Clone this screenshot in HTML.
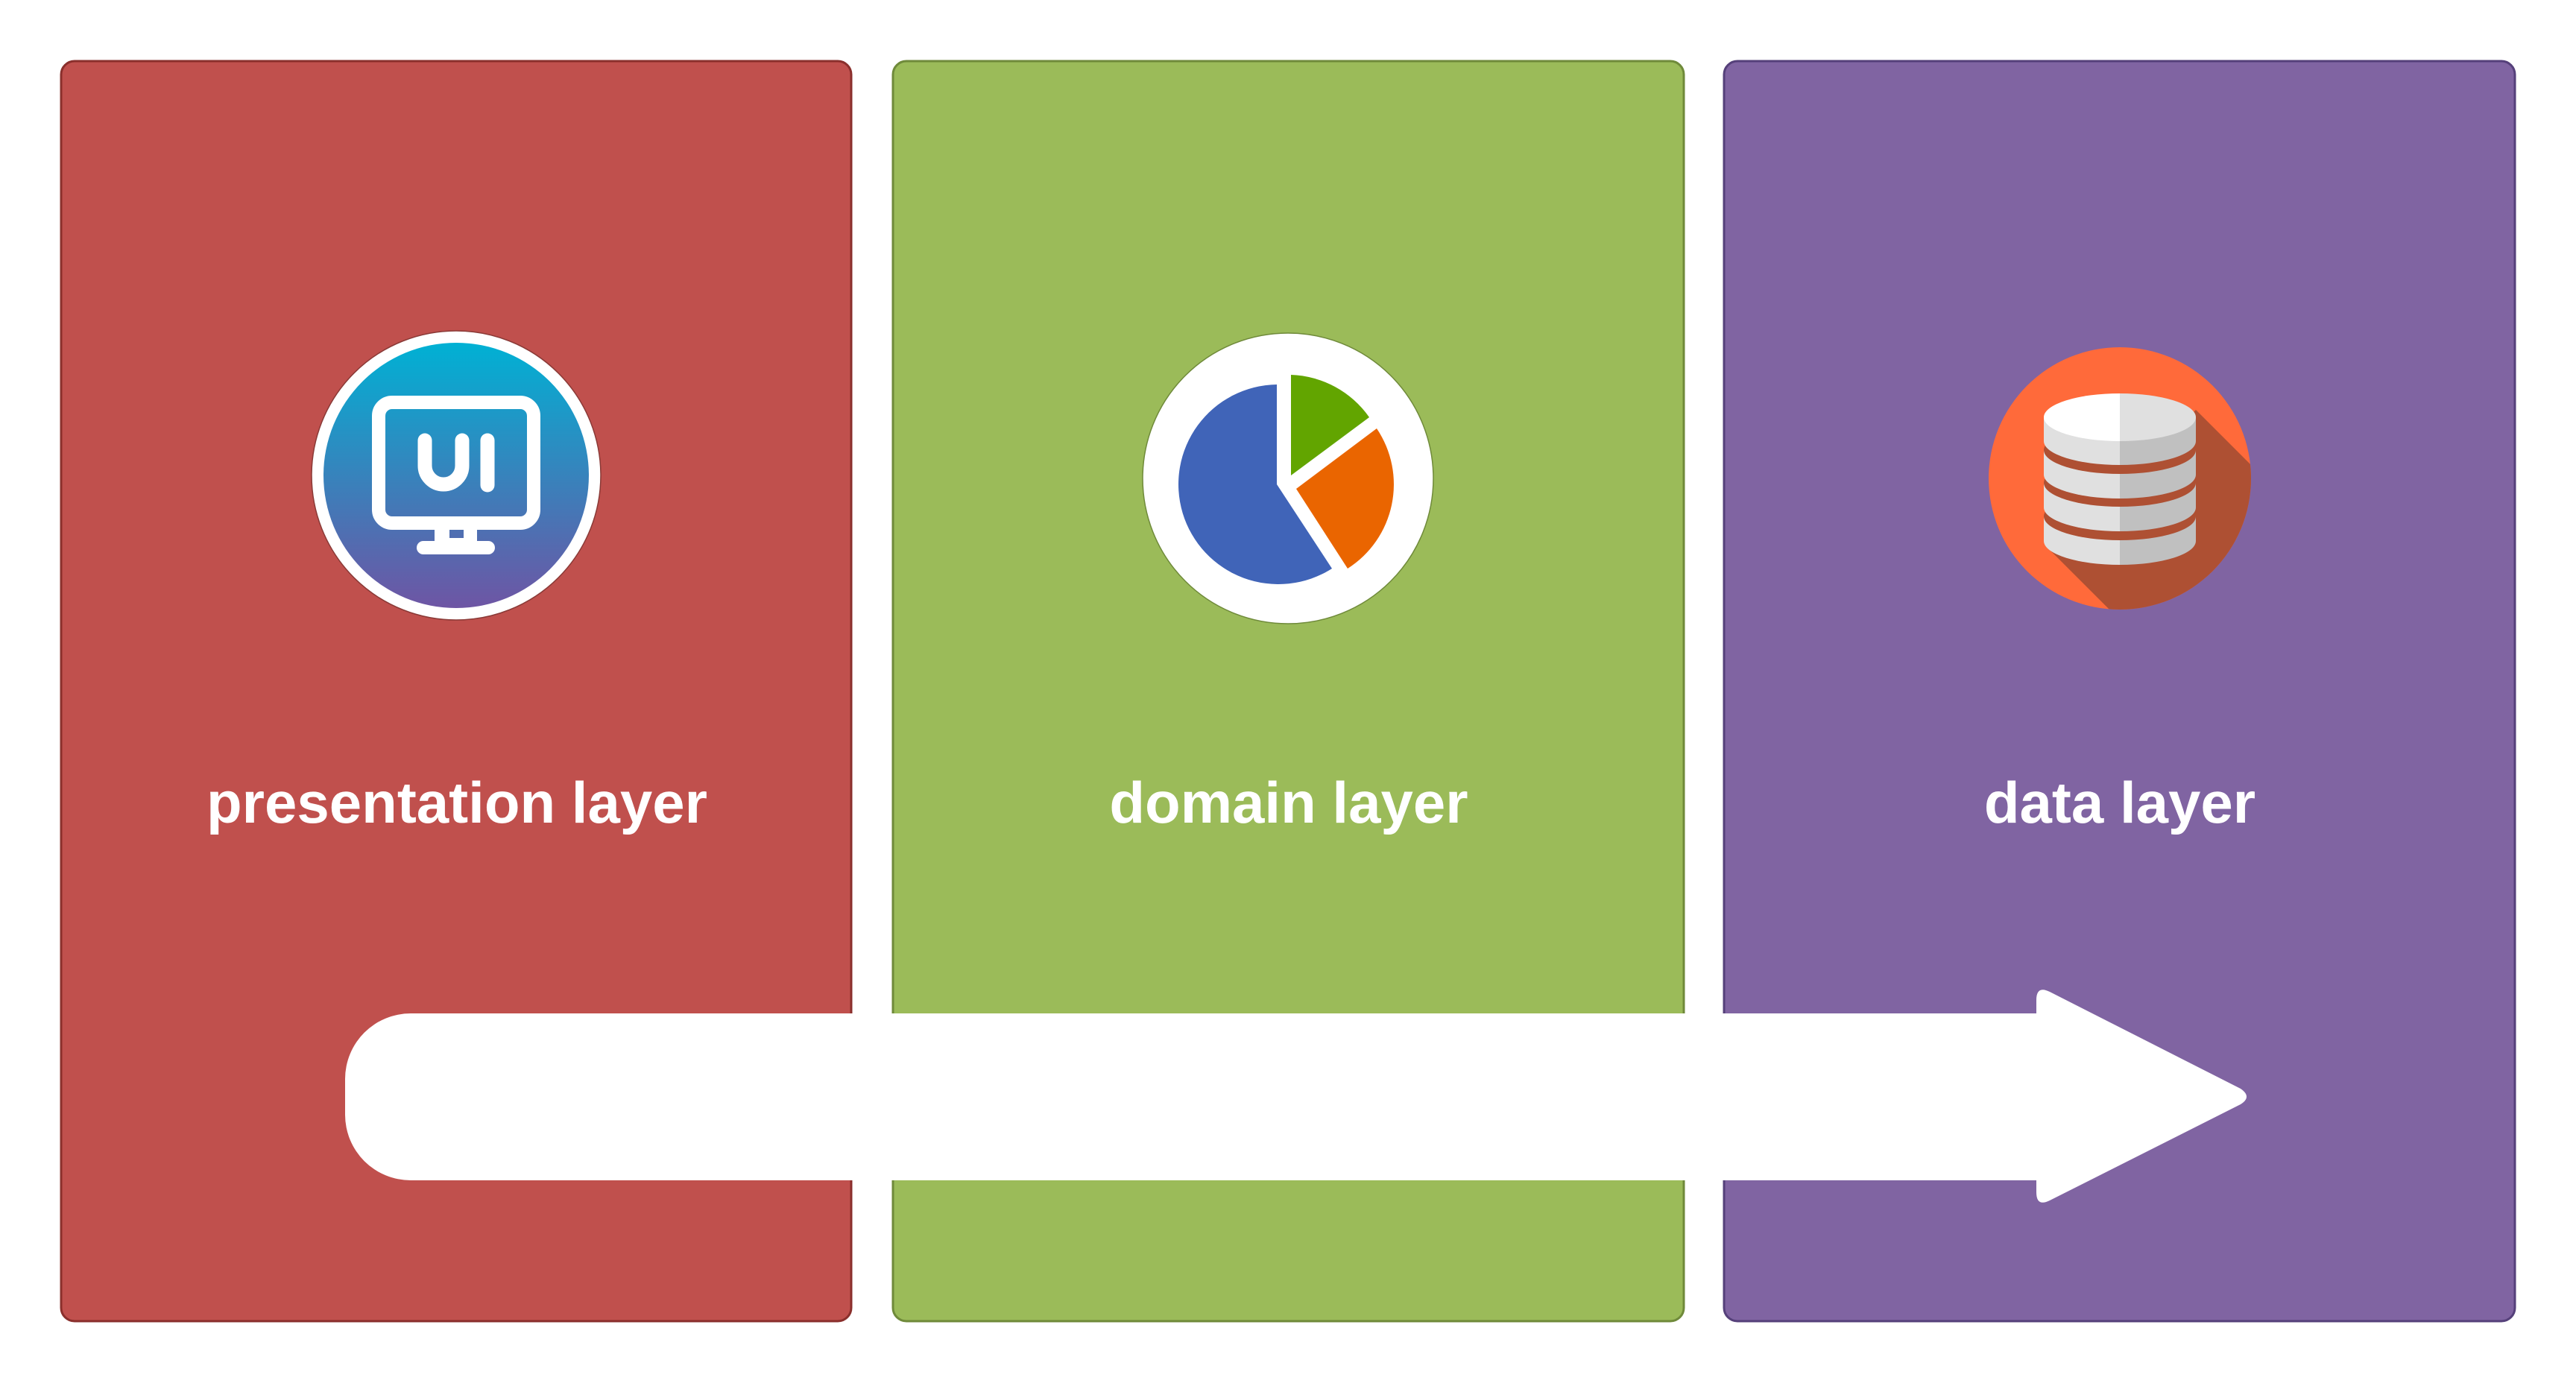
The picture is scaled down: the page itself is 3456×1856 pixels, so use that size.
<!DOCTYPE html>
<html><head><meta charset="utf-8"><style>html,body{margin:0;padding:0;background:#fff;}svg{display:block}</style></head>
<body>
<svg width="3456" height="1856" viewBox="0 0 3456 1856" xmlns="http://www.w3.org/2000/svg">
<defs>
<linearGradient id="g1" x1="0" y1="0" x2="0" y2="1"><stop offset="0" stop-color="#00b1d4"/><stop offset="1" stop-color="#6e55a4"/></linearGradient>
<clipPath id="oc"><circle cx="2844" cy="642" r="176"/></clipPath>
<clipPath id="lh"><rect x="2700" y="400" width="144" height="500"/></clipPath>
<clipPath id="rh"><rect x="2844" y="400" width="144" height="500"/></clipPath>
</defs>
<rect x="82" y="82" width="1060" height="1691" rx="18" fill="#c0504d" stroke="#8a2f2c" stroke-width="3"/>
<rect x="1198" y="82" width="1061" height="1691" rx="18" fill="#9bbb59" stroke="#6f8a3a" stroke-width="3"/>
<rect x="2313" y="82" width="1061" height="1691" rx="18" fill="#8064a2" stroke="#55407a" stroke-width="3"/>

<!-- icon 1 -->
<circle cx="612" cy="638" r="194" fill="#fff" stroke="#8a3a37" stroke-width="1.5"/>
<circle cx="612" cy="638" r="178" fill="url(#g1)"/>
<rect x="508" y="540" width="208" height="162" rx="18" fill="none" stroke="#fff" stroke-width="18"/>
<path d="M583 711h57v16h-57z M603 711v11h19v-11z" fill="#fff" fill-rule="evenodd"/>
<rect x="559" y="726" width="105" height="18" rx="9" fill="#fff"/>
<path d="M570 591v34a25 25 0 0 0 50 0v-34" fill="none" stroke="#fff" stroke-width="19" stroke-linecap="round"/>
<line x1="654" y1="591" x2="654" y2="651" stroke="#fff" stroke-width="19" stroke-linecap="round"/>

<!-- icon 2 -->
<circle cx="1728" cy="642" r="195" fill="#fff" stroke="#6f8a3a" stroke-width="1.5"/>
<path d="M1713 650 L1713 516 A134 134 0 1 0 1787 763 Z" fill="#4064b8"/>
<path d="M1732 638 L1732 503 A134 134 0 0 1 1837 560 Z" fill="#62a500"/>
<path d="M1739 656 L1847 575 A134 134 0 0 1 1808 763 Z" fill="#ea6500"/>

<!-- icon 3 -->
<circle cx="2844" cy="642" r="176" fill="#ff6a3a"/>
<polygon points="2946,550 3246,850 3049,1037 2749,737" fill="#ae5033" clip-path="url(#oc)"/>
<g clip-path="url(#lh)">
<g fill="#e0e0e0"><rect x="2742" y="693" width="204" height="33"/><ellipse cx="2844" cy="726" rx="102" ry="32"/></g>
<ellipse cx="2844" cy="693" rx="102" ry="32" fill="#ae5033"/>
<g fill="#e0e0e0"><rect x="2742" y="648" width="204" height="33"/><ellipse cx="2844" cy="681" rx="102" ry="32"/></g>
<ellipse cx="2844" cy="648" rx="102" ry="32" fill="#ae5033"/>
<g fill="#e0e0e0"><rect x="2742" y="604" width="204" height="33"/><ellipse cx="2844" cy="637" rx="102" ry="32"/></g>
<ellipse cx="2844" cy="604" rx="102" ry="32" fill="#ae5033"/>
<g fill="#e0e0e0"><rect x="2742" y="560" width="204" height="32"/><ellipse cx="2844" cy="592" rx="102" ry="32"/></g>
<ellipse cx="2844" cy="560" rx="102" ry="32" fill="#fff"/>
</g>
<g clip-path="url(#rh)">
<g fill="#c0c0c0"><rect x="2742" y="693" width="204" height="33"/><ellipse cx="2844" cy="726" rx="102" ry="32"/></g>
<ellipse cx="2844" cy="693" rx="102" ry="32" fill="#ae5033"/>
<g fill="#c0c0c0"><rect x="2742" y="648" width="204" height="33"/><ellipse cx="2844" cy="681" rx="102" ry="32"/></g>
<ellipse cx="2844" cy="648" rx="102" ry="32" fill="#ae5033"/>
<g fill="#c0c0c0"><rect x="2742" y="604" width="204" height="33"/><ellipse cx="2844" cy="637" rx="102" ry="32"/></g>
<ellipse cx="2844" cy="604" rx="102" ry="32" fill="#ae5033"/>
<g fill="#c0c0c0"><rect x="2742" y="560" width="204" height="32"/><ellipse cx="2844" cy="592" rx="102" ry="32"/></g>
<ellipse cx="2844" cy="560" rx="102" ry="32" fill="#e0e0e0"/>
</g>

<g font-family="Liberation Sans, Arial, sans-serif" font-weight="bold" font-size="78" fill="#fff" text-anchor="middle">
<text x="613" y="1104">presentation layer</text>
<text x="1729" y="1104">domain layer</text>
<text x="2844" y="1104">data layer</text>
</g>

<!-- arrow -->
<path d="M551 1360 H2732 V1342 Q2732 1322 2750 1331 L3006 1461 Q3022 1472 3006 1482 L2750 1611 Q2732 1620 2732 1600 V1584 H551 A88 88 0 0 1 463 1496 V1448 A88 88 0 0 1 551 1360 Z" fill="#fff"/>
</svg>
</body></html>
